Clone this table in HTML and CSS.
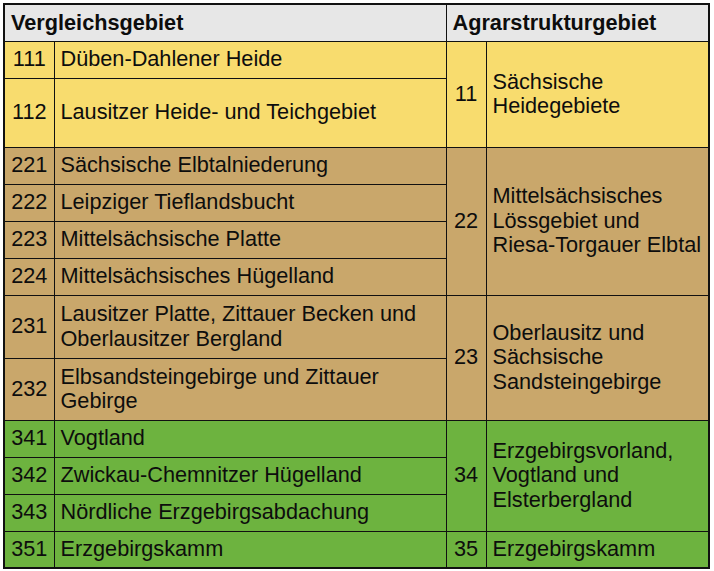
FILE: index.html
```html
<!DOCTYPE html>
<html lang="de">
<head>
<meta charset="utf-8">
<link rel="stylesheet" href="styles.css">
</head>
<body>
<table class="tbl">
  <colgroup>
    <col class="c-code1"><col class="c-text1"><col class="c-code2"><col class="c-text2">
  </colgroup>
  <thead>
    <tr class="h-head">
      <th colspan="2">Vergleichsgebiet</th>
      <th colspan="2">Agrarstrukturgebiet</th>
    </tr>
  </thead>
  <tbody>
    <tr class="yellow h37"><td class="code">111</td><td>Düben-Dahlener Heide</td><td class="code" rowspan="2">11</td><td rowspan="2">Sächsische<br>Heidegebiete</td></tr>
    <tr class="yellow h69"><td class="code">112</td><td>Lausitzer Heide- und Teichgebiet</td></tr>

    <tr class="tan h37"><td class="code">221</td><td>Sächsische Elbtalniederung</td><td class="code" rowspan="4">22</td><td rowspan="4">Mittelsächsisches<br>Lössgebiet und<br>Riesa-Torgauer Elbtal</td></tr>
    <tr class="tan h37"><td class="code">222</td><td>Leipziger Tieflandsbucht</td></tr>
    <tr class="tan h37"><td class="code">223</td><td>Mittelsächsische Platte</td></tr>
    <tr class="tan h37"><td class="code">224</td><td>Mittelsächsisches Hügelland</td></tr>

    <tr class="tan h63"><td class="code">231</td><td>Lausitzer Platte, Zittauer Becken und<br>Oberlausitzer Bergland</td><td class="code" rowspan="2">23</td><td rowspan="2">Oberlausitz und<br>Sächsische<br>Sandsteingebirge</td></tr>
    <tr class="tan h62"><td class="code">232</td><td>Elbsandsteingebirge und Zittauer<br>Gebirge</td></tr>

    <tr class="green h37"><td class="code">341</td><td>Vogtland</td><td class="code" rowspan="3">34</td><td rowspan="3">Erzgebirgsvorland,<br>Vogtland und<br>Elsterbergland</td></tr>
    <tr class="green h37"><td class="code">342</td><td>Zwickau-Chemnitzer Hügelland</td></tr>
    <tr class="green h37"><td class="code">343</td><td>Nördliche Erzgebirgsabdachung</td></tr>
    <tr class="green h37"><td class="code">351</td><td>Erzgebirgskamm</td><td class="code">35</td><td>Erzgebirgskamm</td></tr>
  </tbody>
</table>
</body>
</html>
```

FILE: styles.css
```css
html, body {
  margin: 0;
  padding: 0;
  background: #ffffff;
}
body {
  padding: 3px 0 0 3px;
  font-family: "Liberation Sans", Arial, sans-serif;
  color: #0d0d0d;
}
.tbl {
  border-collapse: collapse;
  table-layout: fixed;
  width: 705px;
  border: 2px solid #111;
  font-size: 21.7px;
  line-height: 24.5px;
}
.c-code1 { width: 50px; }
.c-text1 { width: 392px; }
.c-code2 { width: 40px; }
.c-text2 { width: 223px; }
.tbl th, .tbl td {
  border: 1px solid #111;
  padding: 0 4px 0 6px;
  vertical-align: middle;
  text-align: left;
  white-space: nowrap;
}
.tbl th {
  background: #e7e7e7;
  font-weight: bold;
}
.tbl td.code {
  text-align: center;
  padding: 0;
}
.h-head { height: 37px; }
.h37 { height: 37px; }
.h62 { height: 62px; }
.h63 { height: 63px; }
.h69 { height: 69px; }
.yellow td { background: #f8dc6e; }
.tan td { background: #c9a76b; }
.green td { background: #6db33f; }
```
